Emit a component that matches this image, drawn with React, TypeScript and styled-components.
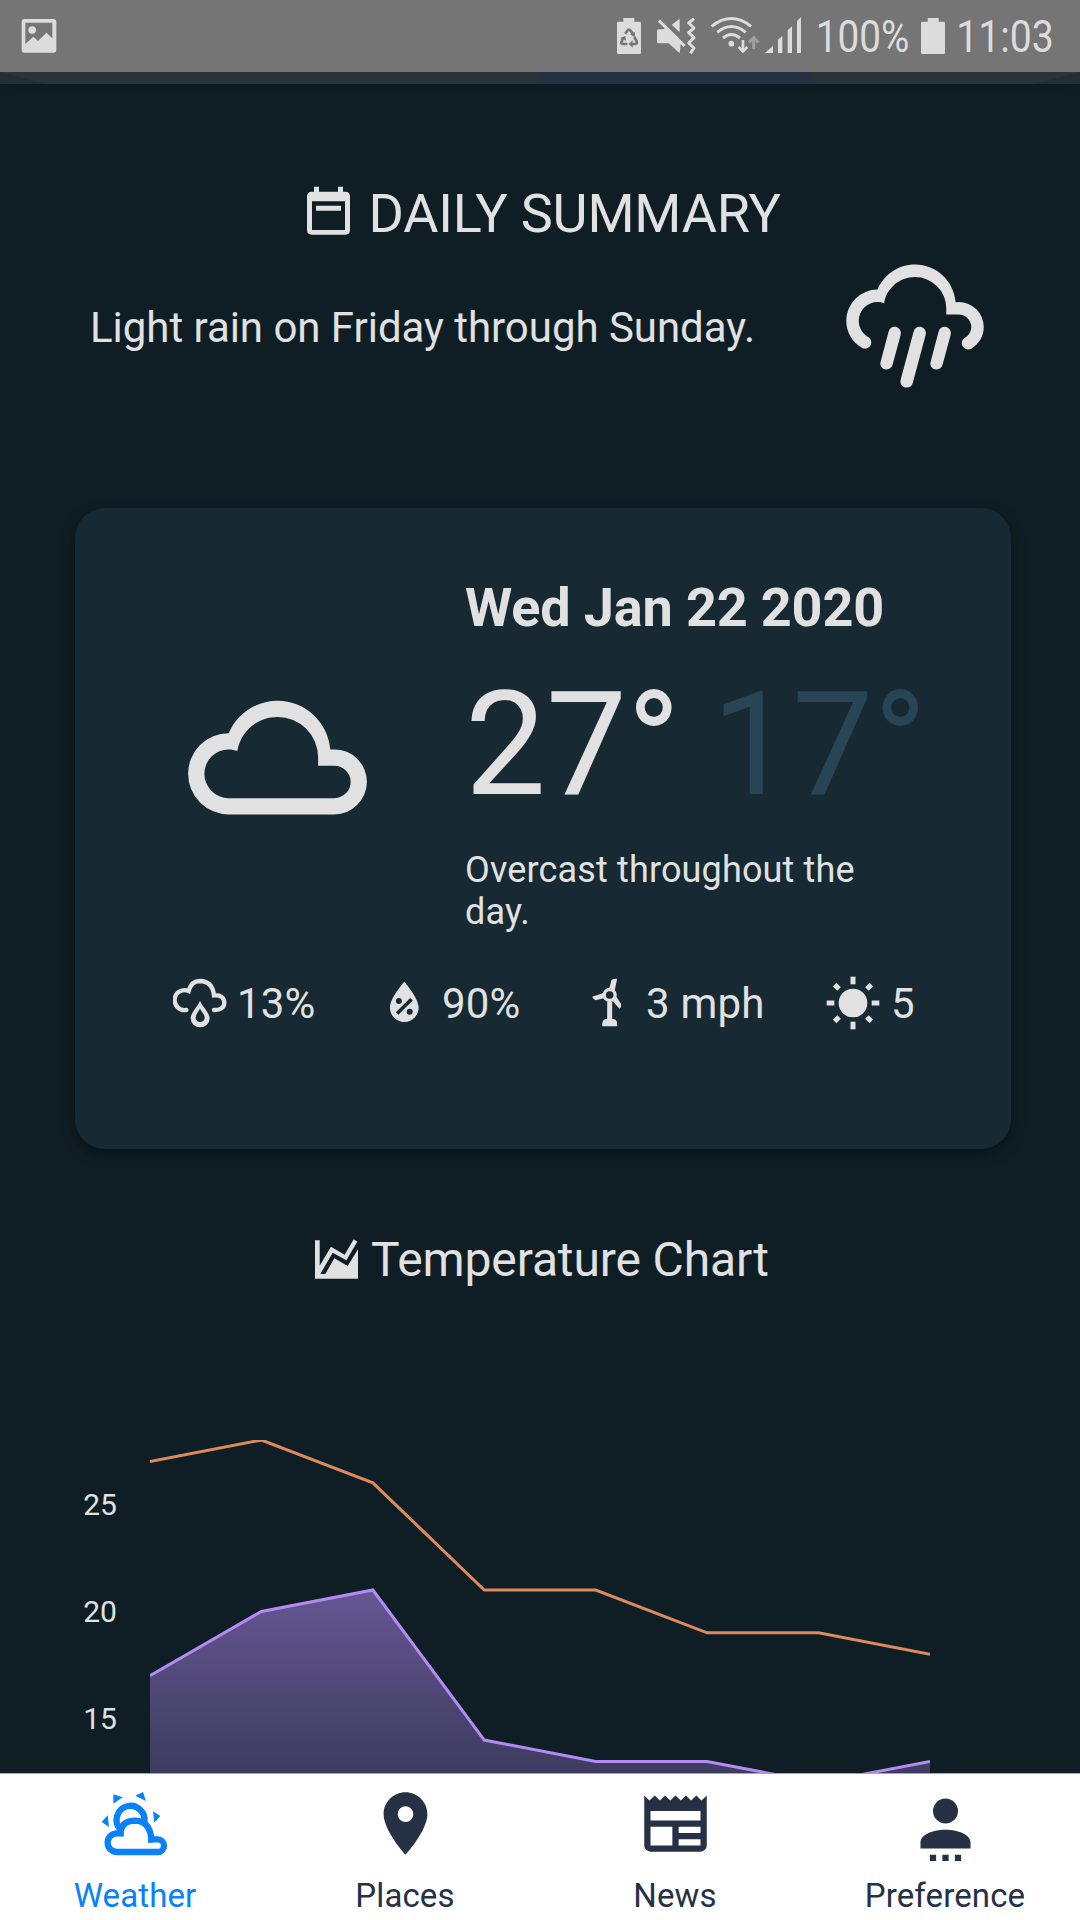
import React from "react";
import styled, { createGlobalStyle } from "styled-components";

const Global = createGlobalStyle`
  html, body { margin: 0; padding: 0; background: #0f1e25; }
  * { box-sizing: border-box; }
  svg { display: block; flex: none; }
`;

const ink = "#e1e1e1";

const Screen = styled.div`
  width: 1080px;
  height: 1920px;
  display: flex;
  flex-direction: column;
  overflow: hidden;
  background: #0f1e25;
  color: ${ink};
  font-family: Roboto, "Liberation Sans", sans-serif;
`;

const StatusBar = styled.header`
  display: flex;
  justify-content: space-between;
  height: 72px;
  padding-left: 1px;
  background: #757575;
  color: #dcdcdc;
`;

const StatusGroup = styled.div`
  display: flex;
  width: 480px;
`;

const StatusText = styled.div<{ $width: number; $squeeze: number; $pad: number }>`
  width: ${(p) => p.$width}px;
  height: 72px;
  padding-left: ${(p) => p.$pad}px;
  font-size: 45px;
  line-height: 74px;
  white-space: nowrap;
  transform: scaleX(${(p) => p.$squeeze});
  transform-origin: left center;
`;

const TopTabs = styled.div`
  display: flex;
  flex: none;
  height: 12px;
  padding-left: 540px;
  background:
    linear-gradient(to top right, #242f35 50%, transparent 51%) left / 45px 12px no-repeat,
    linear-gradient(to top left, #242f35 50%, transparent 51%) right / 45px 12px no-repeat,
    #28343a;
  box-shadow: 0 8px 9px -5px rgba(0, 0, 0, 0.4);
`;

const TopIndicator = styled.div`
  width: 270px;
  height: 12px;
  background: #263145;
`;

const Content = styled.main`
  flex: 1;
  min-height: 0;
  overflow: hidden;
  display: flex;
  flex-direction: column;
`;

const Heading = styled.h2<{
  $size: number;
  $top: number;
  $left: number;
  $gap: number;
  $lift: number;
  $tracking: number;
}>`
  display: flex;
  align-items: center;
  flex: none;
  gap: ${(p) => p.$gap}px;
  height: 64px;
  margin: ${(p) => p.$top}px 0 0;
  padding-left: ${(p) => p.$left}px;
  font-size: ${(p) => p.$size}px;
  font-weight: 400;
  line-height: 64px;
  letter-spacing: ${(p) => p.$tracking}px;
  white-space: nowrap;

  svg {
    margin-bottom: ${(p) => p.$lift}px;
  }
`;

const Summary = styled.section`
  display: flex;
  align-items: center;
  justify-content: space-between;
  flex: none;
  height: 150px;
  margin-top: 6px;
  padding: 0 90px;
  font-size: 42px;
  letter-spacing: -0.035px;
  white-space: nowrap;
`;

const Card = styled.section`
  flex: none;
  width: 936px;
  height: 641px;
  margin: 106px 0 0 75px;
  padding-top: 68px;
  border-radius: 30px;
  background: #172932;
  box-shadow: 0 5px 14px rgba(0, 0, 0, 0.4);
`;

const Forecast = styled.div`
  display: flex;
`;

const CloudSlot = styled.div`
  width: 390px;
  padding: 84px 0 0 105px;
`;

const Details = styled.div`
  width: 500px;
`;

const DateLine = styled.div`
  font-size: 54px;
  font-weight: 700;
  line-height: 64px;
  letter-spacing: -0.16px;
  white-space: nowrap;
`;

const Temps = styled.div`
  margin-top: 20px;
  font-size: 144px;
  line-height: 170px;
  word-spacing: -5px;
  white-space: nowrap;
`;

const Low = styled.span`
  color: #284556;
`;

const Description = styled.div`
  width: 430px;
  margin-top: 19px;
  font-size: 36px;
  line-height: 42px;
  letter-spacing: 0.15px;
`;

const Stats = styled.div`
  display: grid;
  grid-template-columns: 205px 204px 245px 140px;
  margin: 45px 0 0 95px;
`;

const Stat = styled.div`
  display: flex;
  align-items: center;
  gap: 9px;
  height: 50px;
  font-size: 42px;
  letter-spacing: 0.2px;
  white-space: nowrap;
`;

const IconBox = styled.div<{ $nudge?: number }>`
  display: flex;
  justify-content: center;
  width: 58px;
  transform: translateX(${(p) => p.$nudge ?? 0}px);
`;

const Chart = styled.section`
  display: flex;
  flex: none;
  margin-top: 148px;
`;

const Axis = styled.div`
  display: flex;
  flex-direction: column;
  width: 150px;
  padding: 11px 0 0 50px;
`;

const Tick = styled.div`
  width: 100px;
  height: 107.15px;
  line-height: 107px;
  font-size: 30px;
  text-align: center;
`;

const TabBar = styled.nav`
  display: grid;
  grid-template-columns: repeat(4, 270px);
  flex: none;
  height: 147px;
  border-top: 1px solid #a8a8ac;
  background: #fff;
`;

const Tab = styled.div<{ $active?: boolean }>`
  display: flex;
  flex-direction: column;
  align-items: center;
  padding-top: 12px;
  color: ${(p) => (p.$active ? "#0a80fb" : "#263145")};
  font-size: 33px;
  line-height: 40px;
  letter-spacing: 0.12px;
`;

const TabLabel = styled.div`
  margin-top: 15px;
`;

type GlyphProps = { box: string; w: number; h: number; children: React.ReactNode };
const Glyph = ({ box, w, h, children }: GlyphProps) => (
  <svg viewBox={box} width={w} height={h} fill="currentColor">
    {children}
  </svg>
);

const ImageIcon = () => (
  <Glyph box="0 0 216 216" w={72} h={72}>
    <path fillRule="evenodd" d="M71 57H157Q166 57 166 66V149Q166 158 157 158H71Q62 158 62 149V66Q62 57 71 57ZM73 68V132L97 110L111 123L136 98L154 115V68Z" />
    <circle cx="93.500" cy="90" r="11.500" />
  </Glyph>
);

const BatterySaverIcon = () => (
  <Glyph box="0 0 150 216" w={50} h={72}>
    <path d="M70 54H103V65H119Q123 65 123 69V158Q123 162 119 162H55Q51 162 51 158V69Q51 65 55 65H70Z" />
    <g fill="none" stroke="#757575" strokeWidth="8">
      <path d="M76 101L83 91Q87 87 91 91L98 101" />
      <path d="M103 111L110 124Q112 132 105 132H93" />
      <path d="M82 132H69Q61 131 65 124L70 114" />
    </g>
    <path fill="#757575" d="M90 103L105 96L104 112ZM98 121V143L86 132ZM60 114L76 108L78 122Z" />
  </Glyph>
);

const MuteIcon = () => (
  <Glyph box="150 0 159 216" w={53} h={72}>
    <path d="M171 93Q171 88 176 88H190L200 82L243 124L239 160L206 130H176Q171 130 171 125ZM215 74L239 56V97Z" />
    <path d="M177 62L254 138" stroke="currentColor" strokeWidth="9" />
    <path d="M282 56L266 69L282 84L266 98L282 113L266 129L282 144L271 160" fill="none" stroke="currentColor" strokeWidth="9" strokeLinejoin="round" />
  </Glyph>
);

const WifiIcon = () => (
  <Glyph box="309 0 177 216" w={59} h={72}>
    <g fill="none" stroke="currentColor" strokeWidth="9">
      <path d="M335 79Q394 32 453 79" />
      <path d="M352 97Q394 62 437 97" />
      <path d="M369 114Q394 93 420 114" />
      <path d="M429 120V153M416 141L429 154L442 141" strokeWidth="8" />
    </g>
    <circle cx="394" cy="131" r="8.500" />
    <path d="M461 147V114M447 127L461 113L475 127" fill="none" stroke="#a0a0a0" strokeWidth="9" />
  </Glyph>
);

const SignalIcon = () => (
  <Glyph box="486 0 138 216" w={46} h={72}>
    <path d="M495 159L519 137V159ZM534 159V119L547 108V159ZM563 159V91L576 79V159ZM591 159V63L603 51V159Z" />
  </Glyph>
);

const BatteryIcon = () => (
  <Glyph box="945 0 111 216" w={37} h={72}>
    <path d="M983 54H1016V65H1031Q1035 65 1035 69V158Q1035 162 1031 162H967Q963 162 963 158V69Q963 65 967 65H983Z" />
  </Glyph>
);

const CalendarIcon = () => (
  <Glyph box="81 40 129 153" w={43} h={51}>
    <path fillRule="evenodd" d="M102 45H117V60H174V45H189V60H196Q210 60 210 74V175Q210 189 196 189H95Q81 189 81 175V74Q81 60 95 60H102ZM96 89V175H195V89ZM108 102H183V117H108Z" />
  </Glyph>
);

const PouringIcon = () => (
  <Glyph box="0 0 24 24" w={150} h={150}>
    <path d="M9,12C9.53,12.14 9.85,12.69 9.71,13.22L8.41,18.05C8.27,18.59 7.72,18.9 7.19,18.76C6.65,18.62 6.34,18.07 6.5,17.54L7.78,12.71C7.92,12.17 8.47,11.86 9,12M13,12C13.53,12.14 13.85,12.69 13.71,13.22L11.64,20.95C11.5,21.5 10.95,21.8 10.41,21.66C9.88,21.5 9.56,20.97 9.7,20.43L11.78,12.71C11.92,12.17 12.47,11.86 13,12M17,12C17.53,12.14 17.85,12.69 17.71,13.22L16.41,18.05C16.27,18.59 15.72,18.9 15.19,18.76C14.65,18.62 14.34,18.07 14.5,17.54L15.78,12.71C15.92,12.17 16.47,11.86 17,12M17,10V9A5,5 0 0,0 12,4C9.5,4 7.45,5.82 7.06,8.19C6.73,8.07 6.37,8 6,8A3,3 0 0,0 3,11C3,12.11 3.6,13.08 4.5,13.6V13.59C5,13.87 5.14,14.5 4.87,14.96C4.59,15.43 4,15.6 3.5,15.32V15.33C2,14.47 1,12.85 1,11A5,5 0 0,1 6,6C7,3.65 9.3,2 12,2C15.43,2 18.24,4.66 18.5,8.03L19,8A4,4 0 0,1 23,12C23,13.5 22.2,14.77 21,15.46C20.5,15.73 19.91,15.57 19.63,15.09C19.36,14.61 19.5,14 20,13.72C20.6,13.37 21,12.73 21,12A2,2 0 0,0 19,10H17Z" />
  </Glyph>
);

const CloudyIcon = () => (
  <Glyph box="0 0 24 24" w={195} h={195}>
    <path d="M6,19A5,5 0 0,1 1,14A5,5 0 0,1 6,9C7,6.65 9.3,5 12,5C15.43,5 18.24,7.66 18.5,11.03L19,11A4,4 0 0,1 23,15A4,4 0 0,1 19,19H6M19,13H17V12A5,5 0 0,0 12,7C9.5,7 7.45,8.82 7.06,11.19C6.73,11.07 6.37,11 6,11A3,3 0 0,0 3,14A3,3 0 0,0 6,17H19A2,2 0 0,0 21,15A2,2 0 0,0 19,13Z" />
  </Glyph>
);

const RainChanceIcon = () => (
  <Glyph box="37 56 164 150" w={54.67} h={50}>
    <path d="M77 152A30 30 0 1 1 84 95Q92 65 118 65Q156 66 160 108Q191 106 191 131Q190 152 160 152" fill="none" stroke="currentColor" strokeWidth="13" strokeLinecap="round" />
    <path fillRule="evenodd" d="M118 124C124 140 147 160 147 177A28.500 27 0 0 1 90 177C90 160 112 140 118 124ZM118 148C114 156 105 166 105 175A13.500 13 0 0 0 132 175C132 166 122 156 118 148Z" />
  </Glyph>
);

const HumidityIcon = () => (
  <Glyph box="0 0 24 24" w={57.6} h={57.6}>
    <path fillRule="evenodd" d="M12,3.25C12,3.25 6,10 6,14C6,17.32 8.69,20 12,20A6,6 0 0,0 18,14C18,10 12,3.25 12,3.25M14.47,9.97L15.53,11.03L9.53,17.03L8.47,15.97M9.75,10A1.25,1.25 0 0,1 11,11.25A1.25,1.25 0 0,1 9.75,12.5A1.25,1.25 0 0,1 8.5,11.25A1.25,1.25 0 0,1 9.75,10M14.25,14.5A1.25,1.25 0 0,1 15.5,15.75A1.25,1.25 0 0,1 14.25,17A1.25,1.25 0 0,1 13,15.75A1.25,1.25 0 0,1 14.25,14.5Z" />
  </Glyph>
);

const TurbineIcon = () => (
  <Glyph box="94 56 92 148" w={30.67} h={49.33}>
    <circle cx="148.500" cy="107" r="16.500" fill="none" stroke="currentColor" strokeWidth="10" />
    <path d="M147 88L154 62Q157 58 171 58L164 92ZM130 101L96 112Q99 120 107 123L133 116ZM169 112L183 135Q185 143 178 148L158 126ZM141 127H156V179H160Q171 181 171 194V201H126V194Q127 181 137 179H141Z" />
  </Glyph>
);

const SunIcon = () => (
  <Glyph box="799 46 162 162" w={54} h={54}>
    <circle cx="880" cy="127" r="43" />
    {[0, 90, 180, 270].map((a) => (
      <rect key={a} x="872.500" y="48" width="15" height="23" transform={`rotate(${a} 880 127)`} />
    ))}
    {[45, 135, 225, 315].map((a) => (
      <rect key={a} x="872.500" y="49" width="15" height="19" transform={`rotate(${a} 880 127)`} />
    ))}
  </Glyph>
);

const ChartIcon = () => (
  <Glyph box="105 52 129 125" w={43} h={41.67}>
    <path d="M105 59H119V135L153 78L194 102L221 56L232 63L199 119L158 96L121 160H136L163 113L203 136L234 86V174H105Z" />
  </Glyph>
);

const WeatherTabIcon = () => (
  <Glyph box="114 48 225 225" w={75} h={75}>
    <path d="M160 73L188 82L160 101ZM226 77L249 66L258 93ZM279 124L301 138L283 158ZM143 136L125 156L147 171Z" />
    <g fill="none" stroke="currentColor" strokeWidth="19">
      <path d="M179 176A42 42 0 1 1 253 157" />
      <path d="M171 246A28 28 0 0 1 171 190H181Q183 152 227 152Q270 154 274 208H293A19 19 0 0 1 293 246Z" />
    </g>
    <path d="M181 181H191V199H181ZM264 200H278V218H264Z" />
  </Glyph>
);

const PlaceIcon = () => (
  <Glyph box="0 0 24 24" w={75} h={75}>
    <path d="M12 2C8.130 2 5 5.130 5 9c0 5.250 7 13 7 13s7-7.750 7-13c0-3.870-3.130-7-7-7zm0 9.500a2.500 2.500 0 1 1 0-5 2.500 2.500 0 0 1 0 5z" />
  </Glyph>
);

const NewsIcon = () => (
  <Glyph box="0 0 24 24" w={75} h={75}>
    <path d="M20,11H4V8H20M20,15H13V13H20M20,19H13V17H20M11,19H4V13H11M20.33,4.67L18.67,3L17,4.67L15.33,3L13.67,4.67L12,3L10.33,4.67L8.67,3L7,4.67L5.33,3L3.67,4.67L2,3V19A2,2 0 0,0 4,21H20A2,2 0 0,0 22,19V3L20.33,4.67Z" />
  </Glyph>
);

const PreferenceIcon = () => (
  <Glyph box="0 0 24 24" w={75} h={75}>
    <path d="M12,4A4,4 0 0,1 16,8A4,4 0 0,1 12,12A4,4 0 0,1 8,8A4,4 0 0,1 12,4M12,14C16.42,14 20,15.79 20,18V20H4V18C4,15.79 7.58,14 12,14M7,22H9V24H7V22M11,22H13V24H11V22M15,22H17V24H15V22Z" />
  </Glyph>
);

const highs = [27, 28, 26, 21, 21, 19, 19, 18];
const lows = [17, 20, 21, 14, 13, 13, 12, 13];
const toPoints = (values: number[]) =>
  values.map((v, i) => `${(i * 780) / 7},${(28 - v) * 21.43}`).join(" ");

const TemperaturePlot = () => (
  <svg width="780" height="380" viewBox="0 0 780 380">
    <defs>
      <linearGradient id="lowFill" gradientUnits="userSpaceOnUse" x1="0" y1="150" x2="0" y2="333">
        <stop offset="0" stopColor="#b388f5" stopOpacity="0.53" />
        <stop offset="1" stopColor="#b388f5" stopOpacity="0.28" />
      </linearGradient>
    </defs>
    <polygon points={`0,380 ${toPoints(lows)} 780,380`} fill="url(#lowFill)" />
    <polyline points={toPoints(lows)} fill="none" stroke="#b58af4" strokeWidth="3" />
    <polyline points={toPoints(highs)} fill="none" stroke="#de8a5f" strokeWidth="3" />
  </svg>
);

const stats = [
  { icon: <RainChanceIcon />, value: "13%", nudge: 1 },
  { icon: <HumidityIcon />, value: "90%", nudge: 0.5 },
  { icon: <TurbineIcon />, value: "3 mph", nudge: -1.5 },
  { icon: <SunIcon />, value: "5" },
];

const tabs = [
  { icon: <WeatherTabIcon />, label: "Weather", active: true },
  { icon: <PlaceIcon />, label: "Places" },
  { icon: <NewsIcon />, label: "News" },
  { icon: <PreferenceIcon />, label: "Preference" },
];

export default function App() {
  return (
    <Screen>
      <Global />
      <StatusBar>
        <ImageIcon />
        <StatusGroup>
          <BatterySaverIcon />
          <MuteIcon />
          <WifiIcon />
          <SignalIcon />
          <StatusText $width={107} $squeeze={0.86} $pad={9}>100%</StatusText>
          <BatteryIcon />
          <StatusText $width={128} $squeeze={0.87} $pad={5}>11:03</StatusText>
        </StatusGroup>
      </StatusBar>
      <TopTabs>
        <TopIndicator />
      </TopTabs>
      <Content>
        <Heading $size={54} $top={98} $left={307} $gap={18.5} $lift={8} $tracking={-0.2}>
          <CalendarIcon />
          <span>DAILY SUMMARY</span>
        </Heading>
        <Summary>
          <span>Light rain on Friday through Sunday.</span>
          <PouringIcon />
        </Summary>
        <Card>
          <Forecast>
            <CloudSlot>
              <CloudyIcon />
            </CloudSlot>
            <Details>
              <DateLine>Wed Jan 22 2020</DateLine>
              <Temps>
                27° <Low>17°</Low>
              </Temps>
              <Description>Overcast throughout the day.</Description>
            </Details>
          </Forecast>
          <Stats>
            {stats.map((s) => (
              <Stat key={s.value}>
                <IconBox $nudge={s.nudge}>{s.icon}</IconBox>
                <span>{s.value}</span>
              </Stat>
            ))}
          </Stats>
        </Card>
        <Heading $size={48} $top={79} $left={315} $gap={13} $lift={3} $tracking={-0.12}>
          <ChartIcon />
          <span>Temperature Chart</span>
        </Heading>
        <Chart>
          <Axis>
            <Tick>25</Tick>
            <Tick>20</Tick>
            <Tick>15</Tick>
          </Axis>
          <TemperaturePlot />
        </Chart>
      </Content>
      <TabBar>
        {tabs.map((t) => (
          <Tab key={t.label} $active={t.active}>
            {t.icon}
            <TabLabel>{t.label}</TabLabel>
          </Tab>
        ))}
      </TabBar>
    </Screen>
  );
}
